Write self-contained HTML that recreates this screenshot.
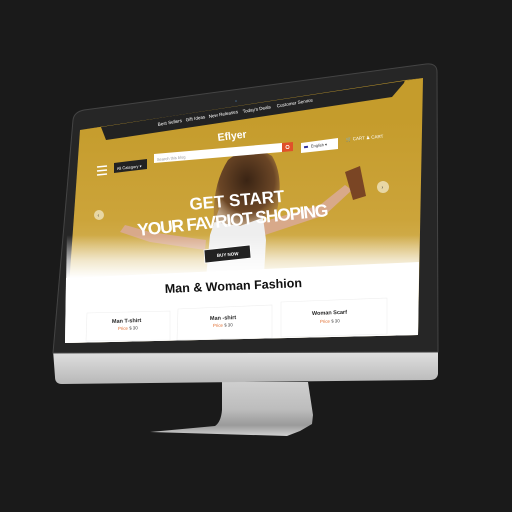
<!DOCTYPE html><html><head><style>
html,body{margin:0;padding:0;background:#1a1a1a;width:512px;height:512px;overflow:hidden}
svg{display:block}
text{font-family:"Liberation Sans",sans-serif}
</style></head><body>
<svg width="512" height="512" viewBox="0 0 512 512">
<defs>
<linearGradient id="scr" x1="0" y1="120" x2="0" y2="285" gradientUnits="userSpaceOnUse">
<stop offset="0" stop-color="#c59c2c"/><stop offset="0.6" stop-color="#cca43a"/><stop offset="1" stop-color="#d8bb6a"/></linearGradient>
<linearGradient id="fade" x1="0" y1="235" x2="0" y2="278" gradientUnits="userSpaceOnUse">
<stop offset="0" stop-color="#fff" stop-opacity="0"/><stop offset="0.6" stop-color="#fff" stop-opacity="0.7"/><stop offset="1" stop-color="#fff" stop-opacity="1"/></linearGradient>
<linearGradient id="chin" x1="0" y1="350" x2="0" y2="383" gradientUnits="userSpaceOnUse">
<stop offset="0" stop-color="#e2e2e2"/><stop offset="1" stop-color="#b9b9b9"/></linearGradient>
<linearGradient id="neck" x1="0" y1="382" x2="0" y2="436" gradientUnits="userSpaceOnUse">
<stop offset="0" stop-color="#cfcfcf"/><stop offset="0.5" stop-color="#bdbdbd"/><stop offset="0.8" stop-color="#9a9a9a"/><stop offset="1" stop-color="#d0d0d0"/></linearGradient>
<radialGradient id="hair" cx="0.5" cy="0.4" r="0.6">
<stop offset="0" stop-color="#3a2414"/><stop offset="0.7" stop-color="#6b4626"/><stop offset="1" stop-color="#9c7040" stop-opacity="0.6"/></radialGradient>
</defs>
<rect width="512" height="512" fill="#1a1a1a"/>
<path d="M222,382 L308,382 L313,415 L312,424 L300,431 L287,436 L150,432 L215,426 Q221,422 222,410 Z" fill="url(#neck)"/>
<path d="M53,350 L438,350 L438,374 Q437,380 430,380 L62,384 Q55,384 55,377 Z" fill="url(#chin)"/>
<path d="M73,120 Q74,112 84,110 L426,64 Q437,63 437,72 L438,352 L53,353 Z" fill="#262626" stroke="#444" stroke-width="1"/>
<path d="M80,130 L423,78 L418,335 L65,343 Z" fill="url(#scr)"/>
<!-- woman -->
<path d="M206,240 L150,232 L125,225 L120,232 L150,242 L205,250 Z" fill="#d8a98a"/>
<path d="M262,222 L320,205 L345,185 L352,190 L325,215 L265,235 Z" fill="#d8a98a"/>
<path d="M345,172 L360,166 L366,196 L353,200 Z" fill="#7a4524"/>
<path d="M222,200 Q240,212 262,210 L266,240 L264,275 L206,278 L210,235 Z" fill="#eeeeee"/>
<path d="M228,160 Q250,142 272,156 Q285,178 276,215 L262,218 L240,226 L214,222 Q212,185 228,160 Z" fill="url(#hair)"/>
<path d="M67,230 L420,205 L418,335 L65,343 Z" fill="url(#fade)"/>
<path d="M66,278 L419,262 L418,335 L65,343 Z" fill="#fff"/>
<!-- nav band -->
<path d="M101,127 L106,140 L392,97 L404,83 L405,80 Z" fill="#222"/>
<path d="M101,127 L406,80 L423,78 L80,130 Z" fill="#c59c2c"/>
<g fill="#fff" font-size="4.6">
<text transform="translate(158,126) rotate(-9.5)">Best Sellers</text>
<text transform="translate(186,121.5) rotate(-9.5)">Gift Ideas</text>
<text transform="translate(209,118) rotate(-9.5)">New Releases</text>
<text transform="translate(243,113) rotate(-9.5)">Today's Deals</text>
<text transform="translate(277,107.5) rotate(-9.5)">Customer Service</text>
</g>
<circle cx="236" cy="101" r="0.8" fill="#468"/>
<text transform="translate(218,141) rotate(-7)" fill="#fff" font-size="10.5" font-weight="bold">Eflyer</text>
<path d="M154,154 L282,143 L282,152 L154,163 Z" fill="#fff"/>
<path d="M282,143 L293,142 L293,151 L282,152 Z" fill="#e0512a"/>
<circle cx="287.5" cy="147" r="1.6" fill="none" stroke="#fff" stroke-width="0.7"/>
<text transform="translate(157,161) rotate(-5.5)" fill="#999" font-size="4">Search this blog</text>
<path d="M301,143 L338,138 L338,149 L301,153 Z" fill="#fff"/>
<text transform="translate(311,147.5) rotate(-6)" fill="#333" font-size="4">English ▾</text>
<rect x="304" y="146" width="4" height="2" fill="#339" transform="rotate(-6 306 147)"/>
<text transform="translate(346,141) rotate(-5)" fill="#fff" font-size="4.5">🛒 CART  ♟ CART</text>
<g stroke="#fff" stroke-width="1.5"><line x1="97" y1="167" x2="107" y2="166"/><line x1="97" y1="171" x2="107" y2="170"/><line x1="97" y1="175" x2="107" y2="174"/></g>
<path d="M114,163 L147,159 L147,169 L114,173 Z" fill="#222"/>
<text transform="translate(117,170) rotate(-6)" fill="#fff" font-size="4">All Category ▾</text>
<circle cx="383" cy="187" r="6" fill="#e8d7a4"/><text x="381.5" y="189" font-size="5" fill="#333">›</text>
<circle cx="99" cy="215" r="5" fill="#e8d7a4"/><text x="97.5" y="217" font-size="5" fill="#333">‹</text>
<text transform="translate(190,210) rotate(-5)" fill="#fff" font-size="17" font-weight="bold">GET START</text>
<text transform="translate(138,236) rotate(-6)" fill="#fff" font-size="17.5" font-weight="bold" textLength="192">YOUR FAVRIOT SHOPING</text>
<path d="M204,250 L250,245 L251,258 L205,263 Z" fill="#222" stroke="#fff" stroke-width="0.8"/>
<text transform="translate(217,257) rotate(-5)" fill="#fff" font-size="4.5" font-weight="bold">BUY NOW</text>
<text transform="translate(165,293) rotate(-2.5)" fill="#111" font-size="12.5" font-weight="bold">Man &amp; Woman Fashion</text>
<g fill="#fff" stroke="#eee" stroke-width="0.6">
<path d="M87,313 L170,311 L170,340 L86,341 Z"/>
<path d="M178,309 L272,305 L272,338 L177,340 Z"/>
<path d="M281,302 L387,298 L387,334 L281,337 Z"/>
</g>
<g font-weight="bold" fill="#222" font-size="5.5">
<text transform="translate(112,323) rotate(-2)">Man T-shirt</text>
<text transform="translate(210,320) rotate(-2)">Man -shirt</text>
<text transform="translate(312,315) rotate(-2)">Woman Scarf</text>
</g>
<g font-size="4.4" fill="#e06a2a">
<text transform="translate(118,330) rotate(-2)">Price <tspan fill="#444">$ 30</tspan></text>
<text transform="translate(213,327) rotate(-2)">Price <tspan fill="#444">$ 30</tspan></text>
<text transform="translate(320,323) rotate(-2)">Price <tspan fill="#444">$ 30</tspan></text>
</g>
</svg>
</body></html>
